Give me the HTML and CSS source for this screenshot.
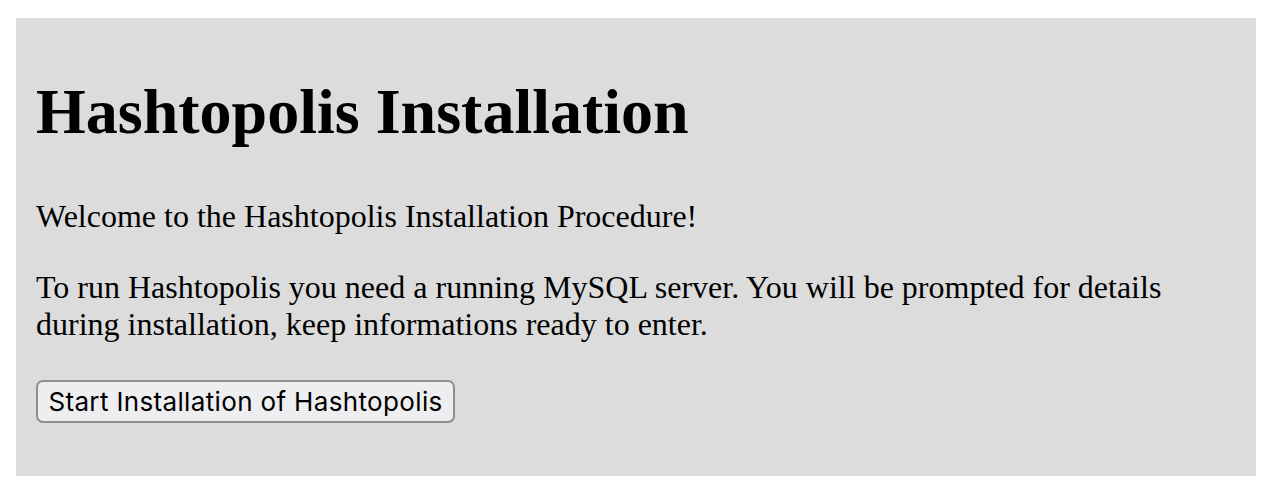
FILE: index.html
```html
<!DOCTYPE html>
<html>
<head>
<meta charset="utf-8">
<link rel="stylesheet" href="styles.css">
</head>
<body>
<div class="install">
  <h1 class="title">Hashtopolis Installation</h1>
  <p class="text welcome">Welcome to the Hashtopolis Installation Procedure!</p>
  <p class="text info">To run Hashtopolis you need a running MySQL server. You will be prompted for details during installation, keep informations ready to enter.</p>
  <button class="start" type="button">Start Installation of Hashtopolis</button>
</div>
</body>
</html>
```

FILE: styles.css
```css
html, body {
  margin: 0;
  padding: 0;
  background: #ffffff;
}
body {
  padding: 18px 14px 18px 16px;
}
.install {
  background: #dcdcdc;
  padding: 57px 20px 53px 20px;
  height: 348px;
}
.title {
  margin: 0;
  font-family: "Liberation Serif", "Times New Roman", serif;
  font-weight: bold;
  font-size: 64px;
  line-height: 74px;
  color: #000;
}
.text {
  margin: 0;
  font-family: "Liberation Serif", "Times New Roman", serif;
  font-size: 32px;
  line-height: 37px;
  color: #000;
}
.welcome {
  margin-top: 49px;
}
.info {
  margin-top: 34px;
}
.start {
  margin-top: 37px;
  display: block;
  width: 419px;
  height: 43px;
  padding: 0;
  font-family: Inter, "Noto Sans", sans-serif;
  font-size: 26px;
  letter-spacing: 0.35px;
  color: #000;
  background: #eeeef0;
  border: 2px solid #8e8e93;
  border-radius: 7px;
}
```
